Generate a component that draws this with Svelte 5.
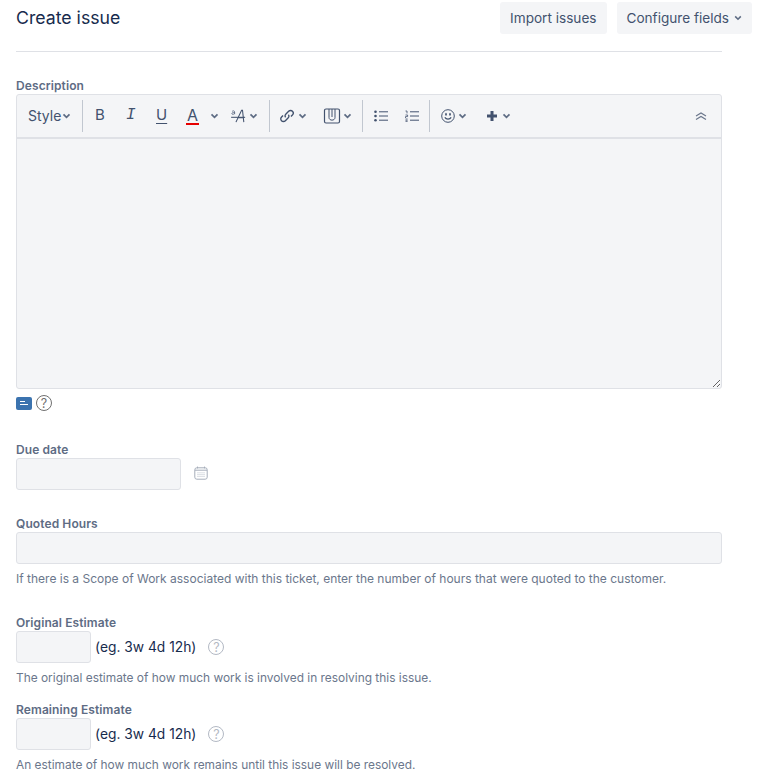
<script>
  const chevron = "M1.5 1.5 L5 5 L8.5 1.5";
</script>

<div class="page">
  <header class="head">
    <h1>Create issue</h1>
    <div class="actions">
      <button class="btn">Import issues</button>
      <button class="btn">Configure fields
        <svg class="chev" viewBox="0 0 10 7" width="8" height="6"><path d={chevron} /></svg>
      </button>
    </div>
  </header>

  <form class="form">
    <div class="field desc">
      <label for="description">Description</label>
      <div class="editor">
        <div class="toolbar">
          <div class="group style">
            <span class="style-label">Style</span>
            <svg class="chev" viewBox="0 0 10 7" width="9" height="6"><path d={chevron} /></svg>
          </div>
          <div class="group text">
            <span class="glyph b">B</span>
            <span class="glyph i">I</span>
            <span class="glyph u">U</span>
            <span class="glyph color">A</span>
            <svg class="chev color-chev" viewBox="0 0 10 7" width="9" height="6"><path d={chevron} /></svg>
            <span class="more-text">
              <svg viewBox="0 0 20 16" width="18" height="14" class="aa">
                <path d="M1 9.5 H17" />
                <path d="M6.5 15 L13 1.5 H14 L15.5 15 M9 10 H15" />
                <path d="M2 3 C3 1.5 5 2 5 3.4 V6 M5 4 C3 4 1.6 4.4 1.8 5.4 C2 6.4 4 6.4 5 5" class="thin" />
              </svg>
              <svg class="chev" viewBox="0 0 10 7" width="9" height="6"><path d={chevron} /></svg>
            </span>
          </div>
          <div class="group link">
            <svg viewBox="0 0 20 20" width="18" height="18" class="ic chain">
              <path d="M8.5 11.5 C7.5 10.5 7.7 9 8.6 8.1 L11.8 4.8 C13 3.6 15 3.6 16.1 4.8 C17.3 6 17.2 7.8 16 9 L14.4 10.6" />
              <path d="M11.5 8.5 C12.5 9.5 12.3 11 11.4 11.9 L8.2 15.2 C7 16.4 5 16.4 3.9 15.2 C2.7 14 2.8 12.2 4 11 L5.6 9.4" />
            </svg>
            <svg class="chev" viewBox="0 0 10 7" width="9" height="6"><path d={chevron} /></svg>
            <svg viewBox="0 0 18 18" width="18" height="18" class="ic clip">
              <rect x="1.5" y="2" width="15" height="14" rx="1.5" />
              <path class="line" d="M6 2 V10.5 C6 14 12 14 12 10.5 V2 M9 2 V10" />
            </svg>
            <svg class="chev" viewBox="0 0 10 7" width="9" height="6"><path d={chevron} /></svg>
          </div>
          <div class="group lists">
            <svg viewBox="0 0 14 12" width="14" height="12" class="ic">
              <circle class="dot" cx="1.5" cy="1.8" r="1.3" />
              <circle class="dot" cx="1.5" cy="6" r="1.3" />
              <circle class="dot" cx="1.5" cy="10.2" r="1.3" />
              <path class="line" d="M5 1.8 H14 M5 6 H14 M5 10.2 H14" />
            </svg>
            <svg viewBox="0 0 14 12" width="14" height="12" class="ic">
              <path class="thin" d="M0.5 1 H2 V3.4 M0.5 5 H2.6 V6.6 H0.5 V8 M0.5 9 H2.6 M0.5 10.3 H2.6 M0.5 11.6 H2.6" />
              <path class="line" d="M5 1.8 H14 M5 6 H14 M5 10.2 H14" />
            </svg>
          </div>
          <div class="group insert">
            <svg viewBox="0 0 14 14" width="14" height="14" class="ic">
              <circle class="ring" cx="7" cy="7" r="6.3" />
              <ellipse class="dot" cx="5" cy="5.2" rx="0.8" ry="1.5" />
              <ellipse class="dot" cx="9" cy="5.2" rx="0.8" ry="1.5" />
              <path d="M3.8 8.4 C5.2 10.6 8.8 10.6 10.2 8.4" />
            </svg>
            <svg class="chev" viewBox="0 0 10 7" width="9" height="6"><path d={chevron} /></svg>
            <svg viewBox="0 0 12 12" width="12" height="12" class="plus"><path d="M6 1 V11 M1 6 H11" /></svg>
            <svg class="chev" viewBox="0 0 10 7" width="9" height="6"><path d={chevron} /></svg>
          </div>
          <svg viewBox="0 0 12 8" width="12" height="8" class="collapse">
            <path d="M1 4 L6 1 L11 4 M1 7.5 L6 4.5 L11 7.5" />
          </svg>
        </div>
        <textarea id="description"></textarea>
      </div>
      <div class="editor-foot">
        <span class="mode"><i class="top"></i><i></i></span>
        <span class="help dark">?</span>
      </div>
    </div>

    <div class="field due">
      <label for="due">Due date</label>
      <div class="row">
        <input id="due" class="date" type="text" />
        <svg viewBox="0 0 14 14" width="14" height="14" class="cal">
          <rect x="0.8" y="1.8" width="12.4" height="11.4" rx="2" />
          <path d="M1 4.2 H13 M3.5 0.6 V2.4 M10.5 0.6 V2.4" />
          <path class="dots" d="M3.5 6.8 H10.5 M3.5 8.6 H10.5 M3.5 10.4 H10.5" />
        </svg>
      </div>
    </div>

    <div class="field quoted">
      <label for="quoted">Quoted Hours</label>
      <input id="quoted" class="wide" type="text" />
      <p class="hint">If there is a Scope of Work associated with this ticket, enter the number of hours that were quoted to the customer.</p>
    </div>

    <div class="field original">
      <label for="original">Original Estimate</label>
      <div class="row">
        <input id="original" class="short" type="text" />
        <span class="eg">(eg. 3w 4d 12h)</span>
        <span class="help light">?</span>
      </div>
      <p class="hint small">The original estimate of how much work is involved in resolving this issue.</p>
    </div>

    <div class="field remaining">
      <label for="remaining">Remaining Estimate</label>
      <div class="row">
        <input id="remaining" class="short" type="text" />
        <span class="eg">(eg. 3w 4d 12h)</span>
        <span class="help light">?</span>
      </div>
      <p class="hint small">An estimate of how much work remains until this issue will be resolved.</p>
    </div>
  </form>
</div>

<style>
  :global(body) {
    margin: 0;
    background: #fff;
    font-family: Inter, "Liberation Sans", sans-serif;
    color: #172b4d;
  }

  .page {
    padding: 2px 9px 0 16px;
    height: 774px;
    overflow: hidden;
  }

  .head {
    display: flex;
    justify-content: space-between;
    align-items: flex-start;
  }

  h1 {
    margin: 0;
    font-size: 17.7px;
    line-height: 32px;
    font-weight: 400;
    color: #172b4d;
  }

  .actions {
    display: flex;
    gap: 10px;
  }

  .btn {
    height: 32px;
    padding: 0 10px;
    border: 0;
    border-radius: 3px;
    background: #f4f5f7;
    color: #42526e;
    font: 400 13.6px Inter, "Liberation Sans", sans-serif;
    display: flex;
    align-items: center;
    gap: 5px;
  }

  .form {
    width: 706px;
    margin-top: 17px;
    border-top: 1px solid #dfe1e6;
  }

  label {
    display: block;
    font-size: 12px;
    line-height: 16px;
    font-weight: 600;
    letter-spacing: 0.1px;
    color: #5e6c84;
  }

  .desc {
    margin-top: 26px;
  }

  .editor {
    border: 1px solid #dfe1e6;
    border-radius: 3px;
    background: #f4f5f7;
    display: flex;
    flex-direction: column;
    box-sizing: border-box;
    height: 295px;
  }

  .toolbar {
    height: 41px;
    padding-bottom: 1px;
    flex: none;
    display: flex;
    align-items: center;
    border-bottom: 2px solid #dfe1e6;
    position: relative;
    color: #42526e;
  }

  .group {
    display: flex;
    align-items: center;
    height: 32px;
    border-right: 1px solid #c1c7d0;
    box-sizing: border-box;
  }

  .style { width: 66px; padding-left: 11px; gap: 1px; }
  .style-label { font-size: 14px; color: #42526e; }
  .text { width: 187px; position: relative; }
  .link { width: 93px; }
  .lists { width: 67px; }
  .insert { border-right: 0; }

  .glyph {
    position: absolute;
    font-size: 15px;
    line-height: 20px;
    top: 5px;
    color: #42526e;
  }
  .b { left: 12px; font-weight: 400; }
  .i {
    left: 43px;
    font-family: "Liberation Mono", monospace;
    font-style: italic;
    font-size: 16px;
  }
  .u { left: 73px; text-decoration: underline; text-decoration-thickness: 1px; text-underline-offset: 3px; }
  .color { left: 104px; font-size: 16px; }
  .color::after {
    content: "";
    position: absolute;
    left: -1px;
    right: -1px;
    bottom: 0;
    height: 2px;
    background: #e60000;
  }
  .color-chev { position: absolute; left: 127px; top: 13px; }
  .more-text {
    position: absolute;
    left: 147px;
    top: 9px;
    display: flex;
    align-items: center;
    gap: 1px;
  }

  svg path, svg rect, svg circle {
    fill: none;
    stroke: #42526e;
    stroke-width: 1.2;
  }

  .chev { flex: none; }
  .chev path {
    stroke: #5e6c84;
    stroke-width: 2;
  }

  svg .thin { stroke-width: 0.8; }
  svg .line { stroke-width: 1; }
  svg .ring { stroke-width: 1; }
  .chain path { stroke-width: 1.5; }

  svg .dot {
    fill: #42526e;
    stroke: none;
  }

  .link .ic:first-child { margin-left: 8px; }
  .link .chev { margin-left: 2px; }
  .clip { margin-left: 16px; }
  .lists .ic:first-child { margin-left: 11px; }
  .lists .ic + .ic { margin-left: 17px; }
  .insert .ic { margin-left: 11px; }
  .insert .chev { margin-left: 3px; }
  .plus { margin-left: 19px; }
  .plus path { stroke-width: 3; }
  .plus + .chev { margin-left: 4px; }

  .collapse {
    position: absolute;
    right: 14px;
    top: 17px;
  }
  .collapse path { stroke: #6b778c; }

  textarea {
    flex: 1;
    display: block;
    width: 100%;
    box-sizing: border-box;
    border: 0;
    background: transparent;
    resize: vertical;
    outline: none;
  }

  .editor-foot {
    display: flex;
    align-items: center;
    gap: 4px;
    height: 16px;
    margin-top: 6px;
  }

  .mode {
    width: 16px;
    height: 13px;
    border-radius: 2px;
    background: #3b73af;
    display: flex;
    flex-direction: column;
    justify-content: center;
    gap: 2px;
    padding-left: 4px;
    box-sizing: border-box;
  }
  .mode i {
    display: block;
    width: 8px;
    height: 1px;
    background: #fff;
  }
  .mode i.top { width: 5px; }

  .help {
    width: 16px;
    height: 16px;
    border-radius: 50%;
    box-sizing: border-box;
    display: flex;
    align-items: center;
    justify-content: center;
    font-size: 12.5px;
    font-weight: 400;
    flex: none;
  }
  .help.dark { border: 1.5px solid #707070; color: #707070; }
  .help.light { border: 1.5px solid #b3b9c4; color: #b3b9c4; margin-left: 12px; }

  input {
    box-sizing: border-box;
    height: 32px;
    margin: 0;
    background: #f4f5f7;
    border: 1px solid #dfe1e6;
    border-radius: 3px;
    display: block;
    outline: none;
  }
  .wide { width: 100%; }
  .date { width: 165px; }
  .short { width: 75px; }

  .row {
    display: flex;
    align-items: center;
  }

  .cal { margin: -3px 0 0 13px; }
  .cal rect, .cal path { stroke: #a5adba; stroke-width: 1; }
  .cal .dots { stroke-dasharray: 1 1; stroke-width: 0.8; }

  .due { margin-top: 31px; }
  .quoted { margin-top: 26px; }
  .original { margin-top: 28px; }
  .remaining { margin-top: 16px; }

  .eg {
    margin-left: 4px;
    font-size: 13.8px;
    color: #172b4d;
  }

  .hint {
    margin: 7px 0 0;
    font-size: 12px;
    line-height: 16px;
    color: #6b778c;
  }
  .hint.small { font-size: 11.9px; }
</style>
